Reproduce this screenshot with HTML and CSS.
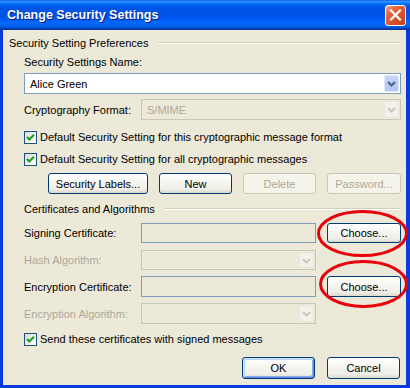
FILE: index.html
```html
<!DOCTYPE html>
<html>
<head>
<meta charset="utf-8">
<title>Change Security Settings</title>
<link rel="stylesheet" href="styles.css">
</head>
<body>
<div class="window">
  <div class="titlebar">
    <span class="title">Change Security Settings</span>
    <div class="close">
      <svg width="19" height="19" viewBox="0 0 19 19"><path d="M5 4.5 L14 13.5 M14 4.5 L5 13.5" stroke="#fff" stroke-width="2.2" stroke-linecap="square" fill="none"/></svg>
    </div>
  </div>
  <div class="client">
    <div class="group sp7"><span class="gtext">Security Setting Preferences</span><span class="rule"></span></div>
    <div class="row indent line sp6">Security Settings Name:</div>
    <div class="row indent sp4">
      <div class="combo grow h21"><span class="value">Alice Green</span>
        <span class="drop"><svg width="9" height="6" viewBox="0 0 9 6"><path d="M1 1 L4.5 4.5 L8 1" stroke="#4D6185" stroke-width="2" fill="none"/></svg></span>
      </div>
    </div>
    <div class="row indent sp5">
      <span class="label">Cryptography Format:</span>
      <div class="combo disabled grow h21"><span class="value">S/MIME</span>
        <span class="drop"><svg width="9" height="6" viewBox="0 0 9 6"><path d="M1 1 L4.5 4.5 L8 1" stroke="#C9C7BA" stroke-width="2" fill="none"/></svg></span>
      </div>
    </div>
    <div class="row indent checkrow sp10">
      <span class="cb"><svg width="11" height="11" viewBox="0 0 11 11"><path d="M2 5 L4.3 7.5 L9 2.8" stroke="#21A121" stroke-width="2.2" fill="none"/></svg></span>
      <span>Default Security Setting for this cryptographic message format</span>
    </div>
    <div class="row indent checkrow sp7">
      <span class="cb"><svg width="11" height="11" viewBox="0 0 11 11"><path d="M2 5 L4.3 7.5 L9 2.8" stroke="#21A121" stroke-width="2.2" fill="none"/></svg></span>
      <span>Default Security Setting for all cryptographic messages</span>
    </div>
    <div class="row buttons sp6">
      <span class="btn w100">Security Labels...</span>
      <span class="btn w73">New</span>
      <span class="btn w73 off">Delete</span>
      <span class="btn w74 off">Password...</span>
    </div>
    <div class="group indent sp9"><span class="gtext">Certificates and Algorithms</span><span class="rule r2"></span></div>
    <div class="row indent sp7">
      <span class="label">Signing Certificate:</span>
      <div class="field h20"></div>
      <span class="btn w74 h20">Choose...</span>
    </div>
    <div class="row indent sp7">
      <span class="label off-text">Hash Algorithm:</span>
      <div class="combo disabled w175 h20"><span class="value"></span>
        <span class="drop"><svg width="9" height="6" viewBox="0 0 9 6"><path d="M1 1 L4.5 4.5 L8 1" stroke="#C9C7BA" stroke-width="2" fill="none"/></svg></span>
      </div>
    </div>
    <div class="row indent sp6">
      <span class="label">Encryption Certificate:</span>
      <div class="field h21"></div>
      <span class="btn w74 h21">Choose...</span>
    </div>
    <div class="row indent sp6">
      <span class="label off-text">Encryption Algorithm:</span>
      <div class="combo disabled w175 h21"><span class="value"></span>
        <span class="drop"><svg width="9" height="6" viewBox="0 0 9 6"><path d="M1 1 L4.5 4.5 L8 1" stroke="#C9C7BA" stroke-width="2" fill="none"/></svg></span>
      </div>
    </div>
    <div class="row indent checkrow sp8">
      <span class="cb"><svg width="11" height="11" viewBox="0 0 11 11"><path d="M2 5 L4.3 7.5 L9 2.8" stroke="#21A121" stroke-width="2.2" fill="none"/></svg></span>
      <span>Send these certificates with signed messages</span>
    </div>
    <div class="row footer sp10">
      <span class="btn w73 h22 default">OK</span>
      <span class="btn w73 h22">Cancel</span>
    </div>
  </div>
</div>
<svg class="annot" width="410" height="388" viewBox="0 0 410 388">
  <ellipse cx="362.5" cy="233.5" rx="44" ry="22" fill="none" stroke="#E8000B" stroke-width="3"/>
  <ellipse cx="363.5" cy="284" rx="43" ry="22.5" fill="none" stroke="#E8000B" stroke-width="3"/>
</svg>
</body>
</html>
```
FILE: styles.css
```css
html, body {
  margin: 0;
  padding: 0;
}
body {
  font-family: "Liberation Sans", Arial, sans-serif;
  font-size: 11px;
  color: #000;
  width: 410px;
  height: 388px;
  overflow: hidden;
  position: relative;
}
.window {
  width: 410px;
  height: 388px;
  display: flex;
  flex-direction: column;
}
.titlebar {
  height: 30px;
  flex: none;
  display: flex;
  align-items: flex-start;
  background: linear-gradient(to bottom, #0058ee 0%, #3593ff 4%, #288eff 7%, #127dff 10%, #036ffc 13%, #0262ee 17%, #0057e5 23%, #0054e3 28%, #0055eb 56%, #005bf5 66%, #026afe 76%, #0062ef 86%, #0052d6 92%, #0040ab 96%, #003092 100%);
}
.title {
  flex: 1;
  margin: 7px 0 0 7px;
  color: #fff;
  font-weight: bold;
  font-size: 12.5px;
  line-height: 16px;
  text-shadow: 1px 1px 0 #0a1a8a;
}
.close {
  margin: 5px 4px 0 0;
  width: 21px;
  height: 21px;
  box-sizing: border-box;
  border: 1px solid #fff;
  border-radius: 3px;
  background: linear-gradient(135deg, #f4a98f 0%, #e5683f 28%, #d9512a 60%, #c63e1c 100%);
  display: flex;
  align-items: center;
  justify-content: center;
}
.client {
  flex: 1;
  display: flex;
  flex-direction: column;
  background: #ECE9D8;
  border-left: 3px solid #0a3be0;
  border-right: 4px solid #0a3be0;
  border-bottom: 3px solid #0a3be0;
  padding: 0 5px 0 6px;
}
.row {
  display: flex;
  align-items: center;
  flex: none;
}
.indent { padding-left: 15px; }
.line { height: 13px; line-height: 13px; }
.sp4 { margin-top: 4px; }
.sp5 { margin-top: 5px; }
.sp6 { margin-top: 6px; }
.sp7 { margin-top: 7px; }
.sp8 { margin-top: 8px; }
.sp9 { margin-top: 9px; }
.sp10 { margin-top: 10px; }
.group {
  display: flex;
  align-items: center;
  height: 13px;
  line-height: 13px;
  flex: none;
}
.gtext { white-space: nowrap; }
.rule {
  flex: 1;
  height: 0;
  margin-left: 9px;
  border-top: 1px solid #D0D0BF;
  border-bottom: 1px solid #fff;
  margin-top: -1px;
}
.rule.r2 { margin-left: 10px; }
.label {
  width: 117px;
  flex: none;
  white-space: nowrap;
}
.off-text { color: #ACA899; }
.grow { flex: 1; }
.h20 { height: 20px; }
.h21 { height: 21px; }
.h22 { height: 22px; }
.w175 { width: 175px; }
.combo {
  box-sizing: border-box;
  border: 1px solid #7F9DB9;
  background: #fff;
  display: flex;
  align-items: center;
  padding: 1px;
}
.combo .value {
  flex: 1;
  padding-left: 4px;
}
.combo.disabled {
  border-color: #C9C7BA;
  background: #ECE9D8;
  color: #ACA899;
}
.drop {
  width: 15px;
  align-self: stretch;
  box-sizing: border-box;
  border: 1px solid #E0E8FE;
  border-radius: 2px;
  background: linear-gradient(to bottom, #C6D6FC 0%, #B8CCF8 60%, #B0C6F7 100%);
  display: flex;
  align-items: center;
  justify-content: center;
  padding-top: 1px;
}
.disabled .drop {
  border-color: #E8E6DD;
  background: #F3F1EA;
}
.checkrow {
  height: 15px;
  line-height: 13px;
}
.cb {
  width: 13px;
  height: 13px;
  box-sizing: border-box;
  border: 1px solid #1C5180;
  background: linear-gradient(135deg, #DCDCD7 0%, #F2F2EE 60%, #FFFFFF 100%);
  margin-right: 3px;
  display: flex;
  align-items: center;
  justify-content: center;
  flex: none;
}
.buttons {
  padding-left: 39px;
  gap: 11px;
}
.btn {
  box-sizing: border-box;
  height: 21px;
  border: 1px solid #003C74;
  border-radius: 3px;
  background: linear-gradient(to bottom, #FFFFFF 0%, #F6F6F2 40%, #EFEEE8 80%, #DCD8CC 100%);
  display: flex;
  align-items: center;
  justify-content: center;
  white-space: nowrap;
  flex: none;
}
.btn.h20 { height: 20px; }
.btn.h21 { height: 21px; }
.btn.h22 { height: 22px; }
.btn.off {
  border-color: #C9C7BA;
  background: #F5F4EA;
  color: #ACA899;
}
.btn.default {
  box-shadow: inset 1px 1px 0 #CEE7FF, inset -1px -1px 0 #6982EE, inset 2px 2px 0 #BCD4F6, inset -2px -2px 0 #89ADE4;
}
.w100 { width: 100px; }
.w73 { width: 73px; }
.w74 { width: 74px; }
.field {
  width: 175px;
  box-sizing: border-box;
  border: 1px solid #7F9DB9;
  background: #ECE9D8;
  margin-right: 11px;
  flex: none;
}
.footer {
  justify-content: flex-end;
  padding-right: 1px;
  gap: 12px;
}
.annot {
  position: absolute;
  left: 0;
  top: 0;
  pointer-events: none;
}
```
